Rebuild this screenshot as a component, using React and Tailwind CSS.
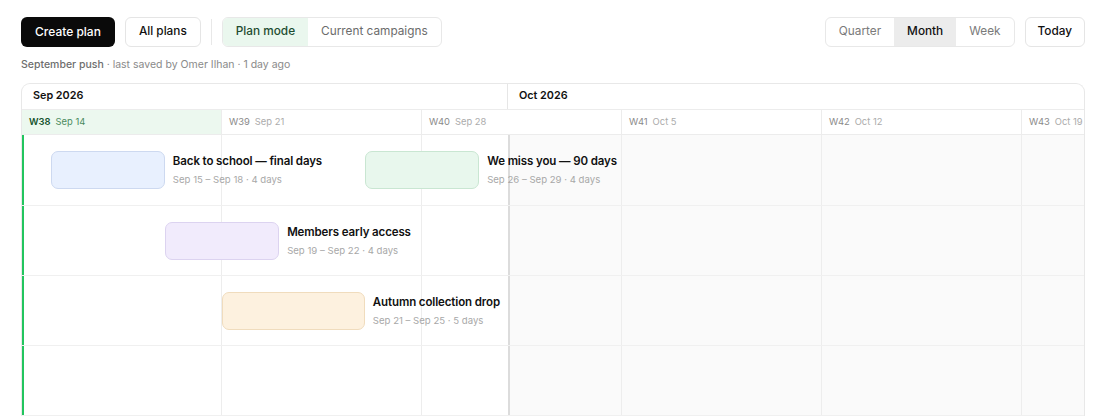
import React from "react";

const DAY = 200 / 7;

const weeks = [
  { w: "W38", d: "Sep 14", active: true },
  { w: "W39", d: "Sep 21" },
  { w: "W40", d: "Sep 28" },
  { w: "W41", d: "Oct 5" },
  { w: "W42", d: "Oct 12" },
  { w: "W43", d: "Oct 19" },
];

const rows = [
  [
    { start: 1, days: 4, title: "Back to school — final days", sub: "Sep 15 – Sep 18 · 4 days", cls: "bg-[#e8f0fe] border-[#cdd9f0]" },
    { start: 12, days: 4, title: "We miss you — 90 days", sub: "Sep 26 – Sep 29 · 4 days", cls: "bg-[#e8f7ed] border-[#c9e6d2]" },
  ],
  [
    { start: 5, days: 4, title: "Members early access", sub: "Sep 19 – Sep 22 · 4 days", cls: "bg-[#f1ebfc] border-[#dcd3f0]" },
  ],
  [
    { start: 7, days: 5, title: "Autumn collection drop", sub: "Sep 21 – Sep 25 · 5 days", cls: "bg-[#fdf1df] border-[#f0dcbd]" },
  ],
  [],
  [],
];

function Row({ items, first }) {
  return (
    <div className={`relative flex items-center border-b border-[#f0f0f0] ${first ? "h-[71px]" : "h-[70px]"}`}>
      {items.map((it, i) => (
        <div
          key={i}
          className="w-0 overflow-visible flex items-center"
          style={{ marginLeft: i === 0 ? `${it.start * DAY}px` : `${(it.start - items[i - 1].start) * DAY}px` }}
        >
          <div className="flex items-center shrink-0">
            <div className={`h-[38px] rounded-[7px] border shrink-0 ${it.cls}`} style={{ width: `${it.days * DAY}px` }} />
            <div className="flex flex-col ml-[8px] gap-[4px] whitespace-nowrap">
              <div className="text-[11.5px] leading-[16px] font-semibold tracking-[-0.01em] text-[#111]">{it.title}</div>
              <div className="text-[9.6px] leading-[14px] text-[#a8a8a8]">{it.sub}</div>
            </div>
          </div>
        </div>
      ))}
    </div>
  );
}

export default function App() {
  return (
    <div className="w-[1106px] h-[416px] overflow-hidden bg-white px-[21px] pt-[17px] font-['Inter',sans-serif] text-[#111]">
      <div className="flex items-center justify-between h-[30px]">
        <div className="flex items-center gap-[10px]">
          <button className="h-[30px] px-[14px] rounded-[6px] bg-[#0a0a0a] text-white text-[12px] font-medium">Create plan</button>
          <button className="h-[30px] px-[13px] rounded-[6px] border border-[#e5e5e5] bg-white text-[11.8px] font-medium">All plans</button>
          <div className="w-px h-[26px] bg-[#e8e8e8]" />
          <div className="flex h-[30px] rounded-[6px] border border-[#e8e8e8] overflow-hidden text-[11.8px]">
            <div className="flex items-center px-[13px] bg-[#eaf7ee] text-[#1e4d31] font-medium">Plan mode</div>
            <div className="flex items-center px-[13px] text-[#6b6b6b]">Current campaigns</div>
          </div>
        </div>
        <div className="flex items-center gap-[10px]">
          <div className="flex h-[30px] rounded-[6px] border border-[#e8e8e8] overflow-hidden text-[11.8px]">
            <div className="flex items-center px-[13px] text-[#7a7a7a]">Quarter</div>
            <div className="flex items-center px-[13px] bg-[#ececec] font-medium">Month</div>
            <div className="flex items-center px-[13px] text-[#7a7a7a]">Week</div>
          </div>
          <button className="h-[30px] px-[12px] rounded-[6px] border border-[#e5e5e5] bg-white text-[11.8px] font-medium">Today</button>
        </div>
      </div>

      <div className="mt-[10px] text-[10.5px] leading-[16px] text-[#8a8a8a]">
        <span className="font-medium text-[#6e6e6e]">September push</span> · last saved by Omer Ilhan · 1 day ago
      </div>

      <div className="mt-[10px] w-[1064px] rounded-t-[9px] border border-[#e8e8e8] border-b-0 overflow-hidden">
        <div className="w-[1200px]">
          <div className="flex h-[26px] border-b border-[#ececec] text-[10.8px] font-semibold">
            <div className="w-[486px] shrink-0 flex items-center pl-[11px] border-r border-[#e6e6e6]">Sep 2026</div>
            <div className="flex-1 flex items-center pl-[11px]">Oct 2026</div>
          </div>
          <div className="flex h-[25px] border-b border-[#ececec] text-[9.4px]">
            {weeks.map((w) => (
              <div
                key={w.w}
                className={`w-[200px] shrink-0 flex items-center gap-[5px] pl-[7px] border-r border-[#ececec] ${w.active ? "bg-[#ecf8ef]" : ""}`}
              >
                <span className={w.active ? "font-semibold text-[#14532d]" : "text-[#8a8a8a]"}>{w.w}</span>
                <span className={w.active ? "text-[#4a8a5e]" : "text-[#ababab]"}>{w.d}</span>
              </div>
            ))}
          </div>
          <div className="relative">
            <div className="absolute inset-y-0 left-[486px] right-0 bg-[#fafafa]" />
            <div className="absolute inset-0 flex">
              {weeks.map((w) => (
                <div key={w.w} className="w-[200px] shrink-0 border-r border-[#ededed]" />
              ))}
            </div>
            <div className="absolute inset-y-0 left-[486px] w-[1.5px] bg-[#dcdcdc]" />
            <div className="absolute inset-y-0 left-0 w-[2px] bg-[#22c55e]" />
            <div className="relative">
              {rows.map((r, i) => (
                <Row key={i} items={r} first={i === 0} />
              ))}
            </div>
          </div>
        </div>
      </div>
    </div>
  );
}
